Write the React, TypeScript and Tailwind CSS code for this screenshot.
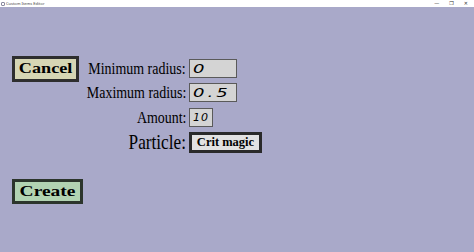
import React from "react";

const serif = { fontFamily: '"Liberation Serif", "Times New Roman", serif' };
const sans = { fontFamily: '"DejaVu Sans", Verdana, sans-serif' };

function Label({ text, big }: { text: string; big?: boolean }) {
  return (
    <div className="flex items-center justify-end" style={serif}>
      <span
        className={`${big ? "text-[21px] leading-[21px]" : "text-[17px] leading-[19px]"} origin-right scale-x-[0.82] whitespace-nowrap text-black`}
      >
        {text}
      </span>
    </div>
  );
}

function Field({ value, wide }: { value: string; wide?: boolean }) {
  return (
    <div
      className={`${wide ? "w-[48px]" : "w-[24px]"} h-[19px] border border-[#5a5a5a] bg-[#d4d4d4] flex items-center pl-[3px] overflow-hidden`}
    >
      <span
        style={sans}
        className={`${wide ? "origin-left scale-x-[1.5] tracking-[2px] text-[12px]" : "tracking-[1px] text-[11px]"} italic leading-none text-black whitespace-nowrap`}
      >
        {value}
      </span>
    </div>
  );
}

export default function App() {
  return (
    <div className="w-[474px] h-[252px] flex flex-col overflow-hidden bg-[#a9a9c9]">
      <div className="h-[7px] bg-white flex items-center justify-between px-[1px]">
        <div className="flex items-center gap-[1px]">
          <div className="w-[4px] h-[4px] border border-[#8a8aa0] rounded-[1px]" />
          <span className="text-[4px] leading-none text-[#444]" style={{ fontFamily: '"Noto Sans", sans-serif' }}>
            Custom Items Editor
          </span>
        </div>
        <div className="flex items-center gap-[10px] pr-[5px] text-[5px] leading-none text-[#333]" style={{ fontFamily: '"DejaVu Sans", sans-serif' }}>
          <span>—</span>
          <span>❐</span>
          <span>✕</span>
        </div>
      </div>

      <div className="flex items-start pt-[49px]">
        <button
          className="ml-[12px] w-[67px] h-[26px] border-[3px] border-[#2e2e2e] bg-[#d6d6b4] flex items-center justify-center"
          style={serif}
        >
          <span className="font-bold text-[14px] leading-none scale-x-[1.3] text-black">Cancel</span>
        </button>

        <div className="mt-[3px] grid grid-cols-[107px_auto] gap-x-[3px] gap-y-[5px]">
          <Label text="Minimum radius:" />
          <Field value="0" wide />
          <Label text="Maximum radius:" />
          <Field value="0.5" wide />
          <div className="mt-[1px] col-span-2 grid grid-cols-[107px_auto] gap-x-[3px]">
            <Label text="Amount:" />
            <Field value="10" />
          </div>
          <Label text="Particle:" big />
          <button
            className="w-[73px] h-[21px] border-[3px] border-[#2a2a2a] bg-[#e2e2e2] flex items-center justify-center"
            style={serif}
          >
            <span className="font-bold text-[12.5px] leading-none text-black whitespace-nowrap">Crit magic</span>
          </button>
        </div>
      </div>

      <button
        className="mt-[26px] ml-[12px] w-[71px] h-[25px] border-[3px] border-[#2c352c] bg-[#b2d3b2] flex items-center justify-center"
        style={serif}
      >
        <span className="font-bold text-[15px] leading-none scale-x-[1.3] text-black">Create</span>
      </button>
    </div>
  );
}
